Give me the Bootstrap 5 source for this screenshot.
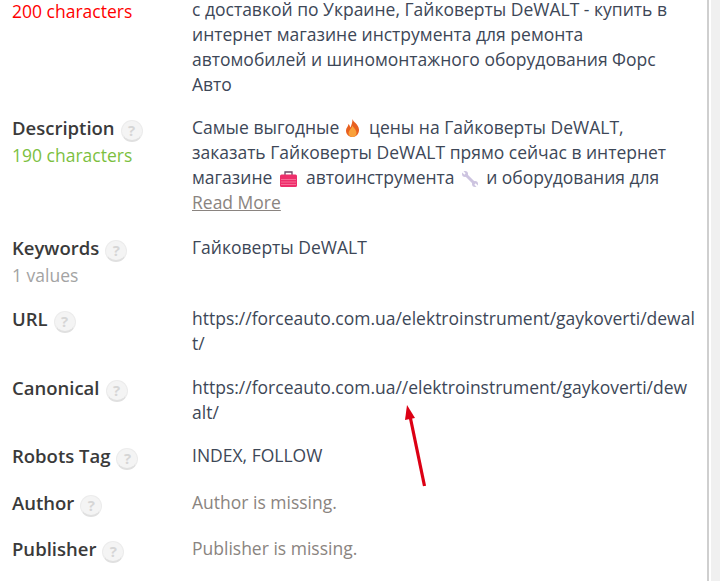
<!DOCTYPE html>
<html lang="en">
<head><meta charset="UTF-8"><meta name="viewport" content="width=device-width, initial-scale=1">
<title>SEO Meta</title>
<link href="https://cdn.jsdelivr.net/npm/bootstrap@5.3.0/dist/css/bootstrap.min.css" rel="stylesheet">
<style>
html,body{height:100%;overflow:hidden}
body{background:#fff;font-family:"Open Sans",sans-serif;font-size:17.5px;line-height:25px;color:#3d4757}
.edge{width:709px;height:581px;border-right:2px solid #cfcfcf;background:#fff;overflow:hidden;position:relative}
.side{position:absolute;left:711px;top:0;width:9px;height:581px;background:#f0f0f0}
.meta-list{margin-top:-3px}
.meta-row{display:flex}
.meta-key{width:192px;flex:none;padding-left:12px}
.meta-val{width:503.5px;flex:none;overflow-wrap:anywhere}
.key-line{display:flex;height:25px;gap:6px}
.key-name{font-size:18.5px;font-weight:600;color:#3a3a3a}
.qmark{display:flex;align-items:center;justify-content:center;width:22px;height:22px;margin-top:5px;border-radius:50%;background:#f4f4f4;border:1px solid #ececec;border-bottom:2px solid #e0e0e0;color:#d6d6d6;font-size:15px;font-weight:700;line-height:1}
.sub-first{margin-top:2px}
.sub-line{margin-top:3px}
.sub-bad{color:#ff0000}
.sub-ok{color:#7cbf3f}
.sub-mute{color:#a3a3a3}
.miss{color:#8a8480}
.more{color:#8a8480;text-decoration:underline}
.emo{display:inline-block;vertical-align:-3px}
.emo-box{margin-left:3px}
.emo-key{margin-left:3px;margin-right:-1px}
.gap-18{margin-bottom:18px}
.gap-20{margin-bottom:20px}
.gap-19{margin-bottom:19px}
.gap-21{margin-bottom:21px}
.gap-22{margin-bottom:22px}
.arrow{position:absolute;left:400px;top:400px}
</style>
</head><body>
<div class="edge">
  <div class="meta-list">
    <div class="meta-row gap-18">
      <div class="meta-key"><div class="sub-bad sub-first">200 characters</div></div>
      <div class="meta-val">с доставкой по Украине, Гайковерты DeWALT - купить в интернет магазине инструмента для ремонта автомобилей и шиномонтажного оборудования Форс Авто</div>
    </div>
    <div class="meta-row gap-20">
      <div class="meta-key"><div class="key-line"><span class="key-name">Description</span><span class="qmark">?</span></div><div class="sub-ok sub-line">190 characters</div></div>
      <div class="meta-val">Самые выгодные <svg class="emo" width="16" height="18" viewBox="0 0 16 18"><path d="M8.500 0c.5 3 6 5 6.500 10.500C15.300 15 12 18 8.500 18S2 15.500 2 11.500C2 9 4 8 4.500 5c1 1 1.500 2.500 2 3.500C7.500 6 8.500 3 8.500 0z" fill="#e8601f"/><path d="M8.500 6.500c.5 2 4 4 4 7.500 0 2.500-2 4-4 4s-4-1.500-4-4C4.500 11.500 8 9 8.500 6.500z" fill="#f9a13a"/></svg>&nbsp; цены на Гайковерты DeWALT, заказать Гайковерты DeWALT прямо сейчас в интернет магазине <svg class="emo emo-box" width="17" height="16" viewBox="0 0 17 16"><path d="M5 4V1h7v3" fill="none" stroke="#6b4a66" stroke-width="1.300"/><rect y="3.500" width="17" height="12.500" rx="1.500" fill="#ee2e6b"/><path d="M1 8.500h15M1 11h15M1 13.500h15" stroke="#f77ba0" stroke-width=".8"/></svg>&nbsp; автоинструмента <svg class="emo emo-key" width="16" height="16" viewBox="0 0 16 16"><path d="M3.500 3.500l9 9" stroke="#cdc4e0" stroke-width="3"/><circle cx="3" cy="3" r="3" fill="#cdc4e0"/><circle cx="13" cy="13" r="3" fill="#cdc4e0"/><path d="M0 0l3 3M16 16l-3-3" stroke="#fff" stroke-width="1.800"/></svg>&nbsp; и оборудования для<br><a href="#" class="more">Read More</a></div>
    </div>
    <div class="meta-row gap-18">
      <div class="meta-key"><div class="key-line"><span class="key-name">Keywords</span><span class="qmark">?</span></div><div class="sub-mute sub-line">1 values</div></div>
      <div class="meta-val">Гайковерты DeWALT</div>
    </div>
    <div class="meta-row gap-19">
      <div class="meta-key"><div class="key-line"><span class="key-name">URL</span><span class="qmark">?</span></div></div>
      <div class="meta-val">https://forceauto.com.ua/elektroinstrument/gaykoverti/dewalt/</div>
    </div>
    <div class="meta-row gap-18">
      <div class="meta-key"><div class="key-line"><span class="key-name">Canonical</span><span class="qmark">?</span></div></div>
      <div class="meta-val">https://forceauto.com.ua//elektroinstrument/gaykoverti/dewalt/</div>
    </div>
    <div class="meta-row gap-22">
      <div class="meta-key"><div class="key-line"><span class="key-name">Robots Tag</span><span class="qmark">?</span></div></div>
      <div class="meta-val">INDEX, FOLLOW</div>
    </div>
    <div class="meta-row gap-21">
      <div class="meta-key"><div class="key-line"><span class="key-name">Author</span><span class="qmark">?</span></div></div>
      <div class="meta-val miss">Author is missing.</div>
    </div>
    <div class="meta-row">
      <div class="meta-key"><div class="key-line"><span class="key-name">Publisher</span><span class="qmark">?</span></div></div>
      <div class="meta-val miss">Publisher is missing.</div>
    </div>
  </div>
  <svg class="arrow" width="32" height="90" viewBox="0 0 32 90"><path d="M24.500 86L10 16" stroke="#dc0014" stroke-width="3.200" fill="none"/><path d="M7 5L5 20l10-2z" fill="#dc0014"/></svg>
</div>
<div class="side"></div>
</body></html>
